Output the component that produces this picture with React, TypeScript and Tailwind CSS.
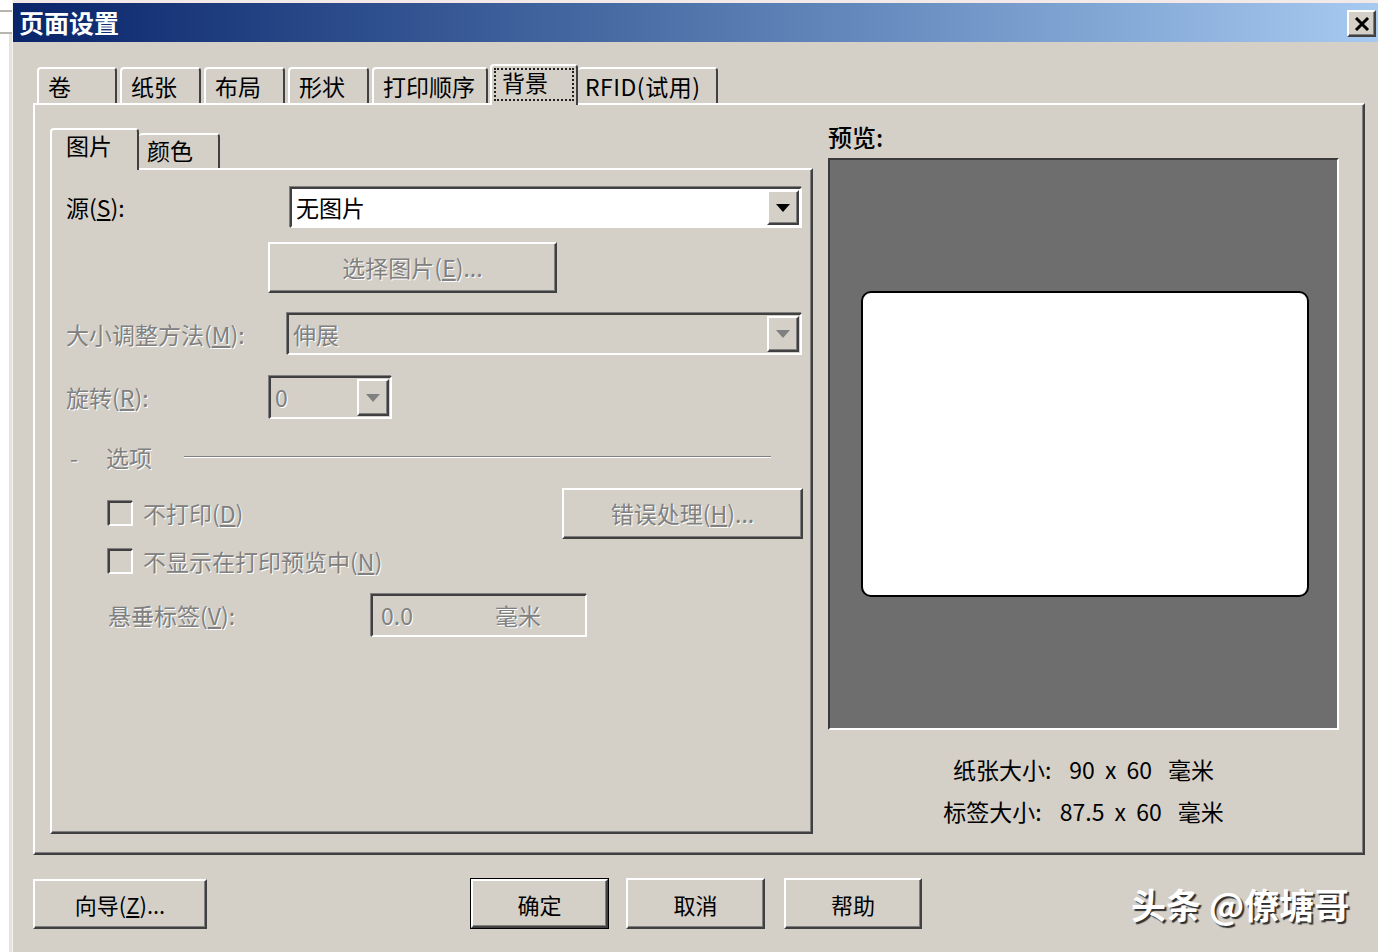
import React from "react";

const raised =
  "border-2 border-t-white border-l-white border-r-[#404040] border-b-[#404040] shadow-[inset_-1px_-1px_0_#808080]";
const sunken =
  "border-2 border-t-[#404040] border-l-[#404040] border-r-white border-b-white shadow-[-1px_-1px_0_#808080]";
const dim = "text-[#808080] [text-shadow:1px_1px_0_#ffffff]";

const Arrow = ({ disabled }: { disabled?: boolean }) => (
  <div className={`${raised} w-[32px] h-full flex items-center justify-center bg-[#d4d0c8]`}>
    <svg width="14" height="8" viewBox="0 0 14 8">
      <polygon points="0,0 14,0 7,8" fill={disabled ? "#808080" : "#000000"} />
    </svg>
  </div>
);

const Combo = ({
  value,
  width,
  height,
  disabled,
}: {
  value: string;
  width: string;
  height: string;
  disabled?: boolean;
}) => (
  <div className={`${sunken} ${width} ${height} flex items-stretch ${disabled ? "bg-[#d4d0c8]" : "bg-white"}`}>
    <div className={`flex-1 flex items-center pl-[4px] ${disabled ? dim : "text-black"}`}>{value}</div>
    <div className="py-[1px] pr-[1px]">
      <Arrow disabled={disabled} />
    </div>
  </div>
);

const Check = ({ label }: { label: React.ReactNode }) => (
  <div className="flex items-center gap-[10px]">
    <div className={`${sunken} w-[25px] h-[25px] bg-[#d4d0c8]`} />
    <span className={dim}>{label}</span>
  </div>
);

const U = ({ children }: { children: React.ReactNode }) => <span className="underline underline-offset-2">{children}</span>;

const outerTabs = [
  { label: "卷", w: "w-[80px]" },
  { label: "纸张", w: "w-[81px]" },
  { label: "布局", w: "w-[81px]" },
  { label: "形状", w: "w-[81px]" },
  { label: "打印顺序", w: "w-[116px]" },
];

export default function App() {
  return (
    <div
      className="flex w-[1378px] h-[952px] overflow-hidden bg-[#d4d0c8] text-[23px] leading-none text-black"
      style={{ fontFamily: '"Noto Sans CJK SC", "Noto Sans", sans-serif' }}
    >
      {/* background window strip */}
      <div className="w-[12px] shrink-0 bg-white flex flex-col">
        <div className="h-[10px]" />
        <div className="h-[2px] bg-[#b8b4ae]" />
        <div className="h-[20px]" />
        <div className="h-[2px] bg-[#b8b4ae]" />
        <div className="flex-1 border-r-[3px] border-[#e6e3de]" />
      </div>

      <div className="flex-1 flex flex-col border-l border-[#f4f2ee]">
        <div className="h-[3px] bg-[#f3e9e9]" />
        {/* title bar */}
        <div className="h-[39px] flex items-center justify-between pl-[6px] pr-[2px] bg-linear-to-r from-[#0a246a] to-[#a6caf0]">
          <span className="text-white font-bold text-[25px]">页面设置</span>
          <div className={`${raised} w-[29px] h-[27px] bg-[#d4d0c8] flex items-center justify-center mt-[2px]`}>
            <svg width="16" height="14" viewBox="0 0 16 14">
              <path d="M2 1 L14 13 M14 1 L2 13" stroke="#000" strokeWidth="3" />
            </svg>
          </div>
        </div>

        <div className="flex flex-col pl-[20px] pr-[13px]">
          {/* outer tabs */}
          <div className="flex items-end h-[61px] pl-[4px] relative z-10">
            {outerTabs.map((t) => (
              <div
                key={t.label}
                className={`${t.w} h-[36px] mr-[3px] border-t-2 border-l-2 border-r-2 border-t-white border-l-white border-r-[#404040] rounded-t-[4px] pl-[9px] pt-[6px]`}
              >
                {t.label}
              </div>
            ))}
            <div className="w-[88px] h-[41px] -mb-[2px] -ml-[1px] border-t-2 border-l-2 border-r-2 border-t-white border-l-white border-r-[#404040] rounded-t-[4px] bg-[#d4d0c8] p-[2px]">
              <div className="w-full h-[33px] border-2 border-dotted border-[#202020] pl-[6px] pt-[1px]">背景</div>
            </div>
            <div className="w-[140px] h-[36px] border-t-2 border-r-2 border-t-white border-r-[#404040] rounded-t-[4px] pl-[7px] pt-[6px] tracking-[0.5px]">
              RFID(试用)
            </div>
          </div>

          {/* main tab panel */}
          <div className={`${raised} h-[752px] flex pl-[15px]`}>
            {/* left inner tab control */}
            <div className="w-[763px] flex flex-col pt-[23px]">
              <div className="flex items-end h-[40px] relative z-10">
                <div className="w-[89px] h-[42px] -mb-[2px] border-t-2 border-l-2 border-r-2 border-t-white border-l-white border-r-[#404040] rounded-t-[4px] bg-[#d4d0c8] pl-[14px] pt-[4px]">
                  图片
                </div>
                <div className="w-[81px] h-[35px] border-t-2 border-r-2 border-t-white border-r-[#404040] rounded-t-[4px] pl-[8px] pt-[4px]">
                  颜色
                </div>
              </div>
              <div className={`${raised} h-[666px] flex flex-col`}>
                <div className="flex items-center mt-[17px] pl-[14px]">
                  <span className="w-[224px]">
                    源(<U>S</U>):
                  </span>
                  <Combo value="无图片" width="w-[512px]" height="h-[41px]" />
                </div>
                <div className="mt-[14px] ml-[216px]">
                  <div className={`${raised} w-[289px] h-[51px] flex items-center justify-center`}>
                    <span className={dim}>
                      选择图片(<U>E</U>)...
                    </span>
                  </div>
                </div>
                <div className="flex items-center mt-[20px] pl-[14px]">
                  <span className={`w-[221px] ${dim}`}>
                    大小调整方法(<U>M</U>):
                  </span>
                  <Combo value="伸展" width="w-[515px]" height="h-[42px]" disabled />
                </div>
                <div className="flex items-center mt-[21px] pl-[14px]">
                  <span className={`w-[203px] ${dim}`}>
                    旋转(<U>R</U>):
                  </span>
                  <Combo value="0" width="w-[123px]" height="h-[43px]" disabled />
                </div>
                <div className="flex items-center mt-[26px] h-[24px] pl-[18px]">
                  <span className={`w-[36px] ${dim}`}>-</span>
                  <span className={`w-[78px] ${dim}`}>选项</span>
                  <div className="w-[587px] h-[2px] border-t border-t-[#808080] border-b border-b-white" />
                </div>
                <div className="flex items-center mt-[19px] pl-[56px]">
                  <div className="w-[454px]">
                    <Check
                      label={
                        <>
                          不打印(<U>D</U>)
                        </>
                      }
                    />
                  </div>
                  <div className={`${raised} w-[241px] h-[51px] flex items-center justify-center`}>
                    <span className={dim}>
                      错误处理(<U>H</U>)...
                    </span>
                  </div>
                </div>
                <div className="mt-[10px] pl-[56px]">
                  <Check
                    label={
                      <>
                        不显示在打印预览中(<U>N</U>)
                      </>
                    }
                  />
                </div>
                <div className="flex items-center mt-[20px] pl-[56px]">
                  <span className={`w-[263px] ${dim}`}>
                    悬垂标签(<U>V</U>):
                  </span>
                  <div className={`${sunken} w-[216px] h-[43px] flex items-center pl-[8px]`}>
                    <span className={`w-[114px] ${dim}`}>0.0</span>
                    <span className={dim}>毫米</span>
                  </div>
                </div>
              </div>
            </div>

            {/* preview column */}
            <div className="ml-[15px] flex flex-col pt-[20px]">
              <span className="font-medium h-[26px] text-[24px]">预览:</span>
              <div
                className={`mt-[7px] w-[511px] h-[572px] bg-[#6f6e6e] border-2 border-t-[#3a3a3a] border-l-[#3a3a3a] border-r-white border-b-white flex items-center justify-center`}
              >
                <div className="w-[448px] h-[306px] bg-white border-2 border-black rounded-[10px] ml-[3px]" />
              </div>
              <div className="mt-[28px] flex flex-col items-center gap-[19px] text-[23px]">
                <div className="flex items-center">
                  <span>纸张大小:</span>
                  <span className="ml-[18px] [word-spacing:5px]">90 x 60</span>
                  <span className="ml-[16px]">毫米</span>
                </div>
                <div className="flex items-center">
                  <span>标签大小:</span>
                  <span className="ml-[18px] [word-spacing:5px]">87.5 x 60</span>
                  <span className="ml-[16px]">毫米</span>
                </div>
              </div>
            </div>
          </div>

          {/* bottom buttons */}
          <div className="flex items-center mt-[23px] text-[22px]">
            <div className={`${raised} w-[174px] h-[50px] flex items-center justify-center`}>
              向导(<U>Z</U>)...
            </div>
            <div className="ml-[263px] w-[139px] h-[51px] border border-black">
              <div className={`${raised} w-full h-full flex items-center justify-center`}>确定</div>
            </div>
            <div className={`${raised} ml-[17px] w-[139px] h-[51px] flex items-center justify-center`}>取消</div>
            <div className={`${raised} ml-[19px] w-[138px] h-[51px] flex items-center justify-center`}>帮助</div>
            <span className="ml-[209px] text-[35px] font-bold text-white [text-shadow:2px_2px_1px_#303030]">
              头条 @僚塘哥
            </span>
          </div>
        </div>
      </div>
    </div>
  );
}
